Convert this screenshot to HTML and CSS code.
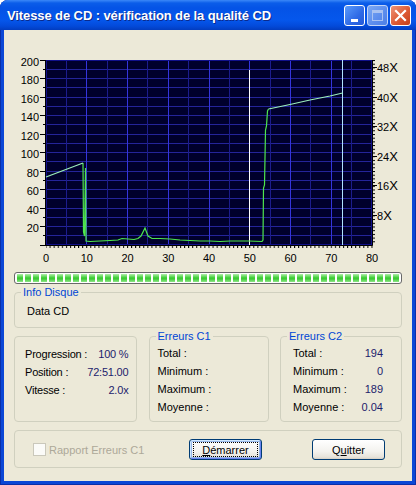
FILE: index.html
```html
<!DOCTYPE html>
<html lang="fr">

<head>
  <meta charset="UTF-8">
  <title>Vitesse de CD : vérification de la qualité CD</title>
  <link rel="stylesheet" href="styles.css">
</head>

<body>
  <div class="window">
    <div class="titlebar">
      <span class="title">Vitesse de CD : vérification de la qualité CD</span>
      <span class="tbtn tbtn-min">
        <svg width="19" height="19" viewBox="0 0 19 19"><rect x="6" y="13" width="7" height="3" fill="#fff"/></svg>
      </span>
      <span class="tbtn tbtn-max">
        <svg width="19" height="19" viewBox="0 0 19 19"><rect x="4.5" y="4.5" width="10" height="10" fill="none" stroke="#a9c2f2"/><rect x="4" y="4" width="11" height="3" fill="#a9c2f2"/></svg>
      </span>
      <span class="tbtn tbtn-close">
        <svg width="19" height="19" viewBox="0 0 19 19"><path d="M5 5 L14 14 M14 5 L5 14" stroke="#fff" stroke-width="2.2" stroke-linecap="square"/></svg>
      </span>
    </div>

    <div class="client">
      <!-- graphique : erreurs (gauche) / vitesse (droite) -->
      <svg class="chart" width="408" height="236" viewBox="4 30 408 236">
        <defs>
          <pattern id="tickX" x="45.5" y="245" width="4.075" height="3" patternUnits="userSpaceOnUse">
            <rect width="1" height="3" fill="#000"/>
          </pattern>
          <pattern id="tickR" x="372" y="245" width="3" height="3.7" patternUnits="userSpaceOnUse">
            <rect width="3" height="1" fill="#000"/>
          </pattern>
        </defs>

        <rect x="46" y="60" width="326" height="185" fill="#00002c"/>
        <path class="grid-h" d="M46 235.5H372M46 226.5H372M46 217.5H372M46 208.5H372M46 198.5H372M46 189.5H372M46 180.5H372M46 171.5H372M46 161.5H372M46 152.5H372M46 143.5H372M46 134.5H372M46 124.5H372M46 115.5H372M46 106.5H372M46 97.5H372M46 87.5H372M46 78.5H372M46 69.5H372"/>
        <path class="grid-minor" d="M66.5 60V245M107.5 60V245M147.5 60V245M188.5 60V245M229.5 60V245M270.5 60V245M310.5 60V245M351.5 60V245"/>
        <path class="grid-major" d="M86.5 60V245M127.5 60V245M168.5 60V245M209.5 60V245M249.5 60V245M290.5 60V245M331.5 60V245"/>
        <rect x="46.5" y="60.5" width="325" height="184" fill="none" stroke="#10108a"/>

        <!-- axes -->
        <path class="axis" d="M45.5 60V245.5H372.5V60"/>
        <path class="axis" d="M40 245.5H46M40 226.5H46M40 208.5H46M40 189.5H46M40 171.5H46M40 152.5H46M40 134.5H46M40 115.5H46M40 97.5H46M40 78.5H46M40 60.5H46"/>
        <path class="axis" d="M43 235.5H46M43 217.5H46M43 198.5H46M43 180.5H46M43 161.5H46M43 143.5H46M43 124.5H46M43 106.5H46M43 87.5H46M43 69.5H46"/>
        <rect x="46" y="245" width="327" height="3" fill="url(#tickX)"/>
        <rect x="372" y="60" width="3" height="185" fill="url(#tickR)"/>
        <path class="axis" d="M372 215.5H377M372 185.5H377M372 156.5H377M372 126.5H377M372 97.5H377M372 67.5H377"/>

        <g class="lbl" text-anchor="end">
          <text x="39" y="65.5">200</text>
          <text x="39" y="84">180</text>
          <text x="39" y="102.5">160</text>
          <text x="39" y="121">140</text>
          <text x="39" y="139.5">120</text>
          <text x="39" y="158">100</text>
          <text x="39" y="176.5">80</text>
          <text x="39" y="195">60</text>
          <text x="39" y="213.5">40</text>
          <text x="39" y="232">20</text>
        </g>
        <g class="lbl">
          <text x="377" y="72">48<tspan class="x">X</tspan></text>
          <text x="377" y="101.5">40<tspan class="x">X</tspan></text>
          <text x="377" y="131">32<tspan class="x">X</tspan></text>
          <text x="377" y="160.5">24<tspan class="x">X</tspan></text>
          <text x="377" y="190">16<tspan class="x">X</tspan></text>
          <text x="377" y="220">8<tspan class="x">X</tspan></text>
        </g>
        <g class="lbl" text-anchor="middle">
          <text x="46" y="262">0</text>
          <text x="86.75" y="262">10</text>
          <text x="127.5" y="262">20</text>
          <text x="168.25" y="262">30</text>
          <text x="209" y="262">40</text>
          <text x="249.75" y="262">50</text>
          <text x="290.5" y="262">60</text>
          <text x="331.25" y="262">70</text>
          <text x="372" y="262">80</text>
        </g>

        <!-- pic C2 et fin de lecture -->
        <line x1="249.5" y1="70" x2="249.5" y2="245" stroke="#ffffff"/>
        <line x1="342.5" y1="60" x2="342.5" y2="245" stroke="#b0e4ff"/>

        <!-- courbe de vitesse -->
        <polyline class="curve" points="83,163 83.5,232 84.5,236 85.5,168 86,241 90,241.5 100,241 110,240.5 118,240 122,238.5 128,239 134,239.5 138,238.5 141,236 145,228 148,236 152,238.5 160,238.5 170,239 180,240 190,240.5 200,241 210,241 220,241.5 230,241 240,241 249,241 262,241.5 263,240 263.5,188 264.5,185 265.5,130 266.5,126 267.5,111 268.5,109"/>
        <polyline class="curve-light" points="46,177 83,163"/>
        <polyline class="curve-light" points="268.5,109 290,104.5 310,100 330,96 342.5,93"/>
      </svg>

      <div class="progress"><div class="progress-fill"></div></div>

      <fieldset class="group group-info">
        <legend>Info Disque</legend>
        <div class="info-text">Data CD</div>
      </fieldset>

      <div class="stats">
        <fieldset class="group group-progress">
          <div class="rows">
            <span>Progression :</span><span class="val">100 %</span>
            <span>Position :</span><span class="val">72:51.00</span>
            <span>Vitesse :</span><span class="val">2.0x</span>
          </div>
        </fieldset>
        <fieldset class="group group-c1">
          <legend>Erreurs C1</legend>
          <div class="rows">
            <span>Total :</span><span class="val"></span>
            <span>Minimum :</span><span class="val"></span>
            <span>Maximum :</span><span class="val"></span>
            <span>Moyenne :</span><span class="val"></span>
          </div>
        </fieldset>
        <fieldset class="group group-c2">
          <legend>Erreurs C2</legend>
          <div class="rows">
            <span>Total :</span><span class="val">194</span>
            <span>Minimum :</span><span class="val">0</span>
            <span>Maximum :</span><span class="val">189</span>
            <span>Moyenne :</span><span class="val">0.04</span>
          </div>
        </fieldset>
      </div>

      <fieldset class="group group-actions">
        <label class="check"><input type="checkbox" disabled>Rapport Erreurs C1</label>
        <button class="btn btn-start"><span class="focus"><u>D</u>émarrer</span></button>
        <button class="btn btn-quit">Q<u>u</u>itter</button>
      </fieldset>
    </div>
  </div>
</body>

</html>
```

FILE: styles.css
```css
body {
  margin: 0;
  background: #ffffff;
  font-family: "Liberation Sans", Arial, sans-serif;
  font-size: 11px;
  color: #000;
}

.window {
  width: 416px;
  height: 485px;
  display: flex;
  flex-direction: column;
  background: #0b47d6;
  border-radius: 8px 8px 0 0;
  overflow: hidden;
  box-shadow: inset 1px 0 #0a2fa8, inset -1px 0 #0a2fa8, inset 0 -1px #0a2fa8;
}

/* barre de titre */
.titlebar {
  height: 30px;
  flex-shrink: 0;
  display: flex;
  align-items: center;
  gap: 2px;
  padding: 0 5px 0 7px;
  background: linear-gradient(#3b88f8 0, #0b5de9 3px, #0453e6 8px, #0557ec 20px, #034ada 26px, #023cbf 30px);
}

.title {
  flex: 1;
  color: #fff;
  font-weight: bold;
  font-size: 13px;
  letter-spacing: -0.1px;
  white-space: nowrap;
  text-shadow: 1px 1px #0b2a8c;
}

.tbtn {
  width: 21px;
  height: 21px;
  box-sizing: border-box;
  border: 1px solid #fff;
  border-radius: 3px;
  display: block;
}

.tbtn svg {
  display: block;
}

.tbtn-min {
  background: linear-gradient(135deg, #5a9bfb, #2f6ae6 60%, #2459d8);
}

.tbtn-max {
  border-color: #c2d4f7;
  background: linear-gradient(135deg, #7aa8f4, #5b8ced 60%, #4d7fe6);
}

.tbtn-close {
  background: linear-gradient(135deg, #ee9478, #dd5a34 55%, #c6401a);
}

/* zone cliente */
.client {
  flex: 1;
  margin: 0 4px 4px;
  padding: 0 10px;
  background: #ece9d8;
  display: flex;
  flex-direction: column;
}

.chart {
  display: block;
  margin: 0 -10px;
}

.grid-h {
  stroke: #24249a;
  stroke-width: 1;
}

.grid-minor {
  stroke: #1c1c8c;
  stroke-width: 1;
}

.grid-major {
  stroke: #3434dc;
  stroke-width: 1;
}

.axis {
  stroke: #000;
  stroke-width: 1;
  fill: none;
}

.lbl {
  font-family: "Liberation Sans", Arial, sans-serif;
  font-size: 11px;
  fill: #000;
}

.lbl .x {
  font-size: 13px;
  font-weight: 100;
}

.curve {
  fill: none;
  stroke: #4ee64e;
  stroke-width: 1.2;
}

.curve-light {
  fill: none;
  stroke: #9cf0bc;
  stroke-width: 1.2;
}

/* barre de progression */
.progress {
  margin-top: 6px;
  height: 12px;
  box-sizing: border-box;
  border: 1px solid #686868;
  border-radius: 3px;
  padding: 1px 2px;
  background: #fff;
}

.progress-fill {
  height: 100%;
  background:
    repeating-linear-gradient(to right, transparent 0 6px, #fff 6px 8px),
    linear-gradient(#b2f0ac, #45cf3c 45%, #3cc934 60%, #8ee688);
}

/* cadres */
.group {
  margin: 0;
  box-sizing: border-box;
  min-width: 0;
  border: 1px solid #d0d0bf;
  border-radius: 4px;
}

.group legend {
  color: #0046d5;
  padding: 0 2px;
  font-size: 11px;
  line-height: 13px;
}

.group-info {
  margin-top: 2px;
  padding: 6px 6px 9px;
}

.info-text {
  padding-left: 6px;
  line-height: 13px;
}

.stats {
  margin-top: 2px;
  height: 92px;
  display: flex;
  justify-content: space-between;
}

.rows {
  display: grid;
  grid-template-columns: auto 1fr;
  line-height: 18px;
  white-space: nowrap;
}

.val {
  text-align: right;
  color: #1c1c6c;
}

.group-progress {
  width: 123px;
  margin-top: 6px;
  padding: 8px 10px 0;
}

.group-progress .rows {
  letter-spacing: -0.2px;
}

.group-c1 {
  width: 120px;
  padding: 1px 6px 0;
}

.group-c1 .rows {
  margin-left: 2px;
}

.group-c2 {
  width: 122px;
  padding: 1px 6px 0;
}

.group-c2 .rows {
  margin: 0 12px 0 6px;
}

/* boutons */
.group-actions {
  margin-top: 8px;
  padding: 8px 16px 7px 18px;
  display: flex;
  align-items: center;
}

.check {
  display: flex;
  align-items: center;
  color: #aca899;
}

.check input {
  appearance: none;
  width: 13px;
  height: 13px;
  margin: 0 3px 0 0;
  border: 1px solid #cac8bb;
  background: #fbfbf8;
}

.btn {
  width: 73px;
  height: 21px;
  padding: 0;
  font: inherit;
  color: #000;
  border: 1px solid #003c74;
  border-radius: 3px;
  background: linear-gradient(#ffffff, #f3f2ee 60%, #e6e3da 90%, #d6d0c5);
}

.btn-start {
  margin-left: auto;
  margin-right: 50px;
  box-shadow: inset 1px 1px #cee7ff, inset -1px -1px #6982ee, inset 0 0 0 2px #98b8ea;
}

.btn .focus {
  display: flex;
  align-items: center;
  justify-content: center;
  box-sizing: border-box;
  height: 15px;
  margin: 0 3px;
  border: 1px dotted #000;
}
```
